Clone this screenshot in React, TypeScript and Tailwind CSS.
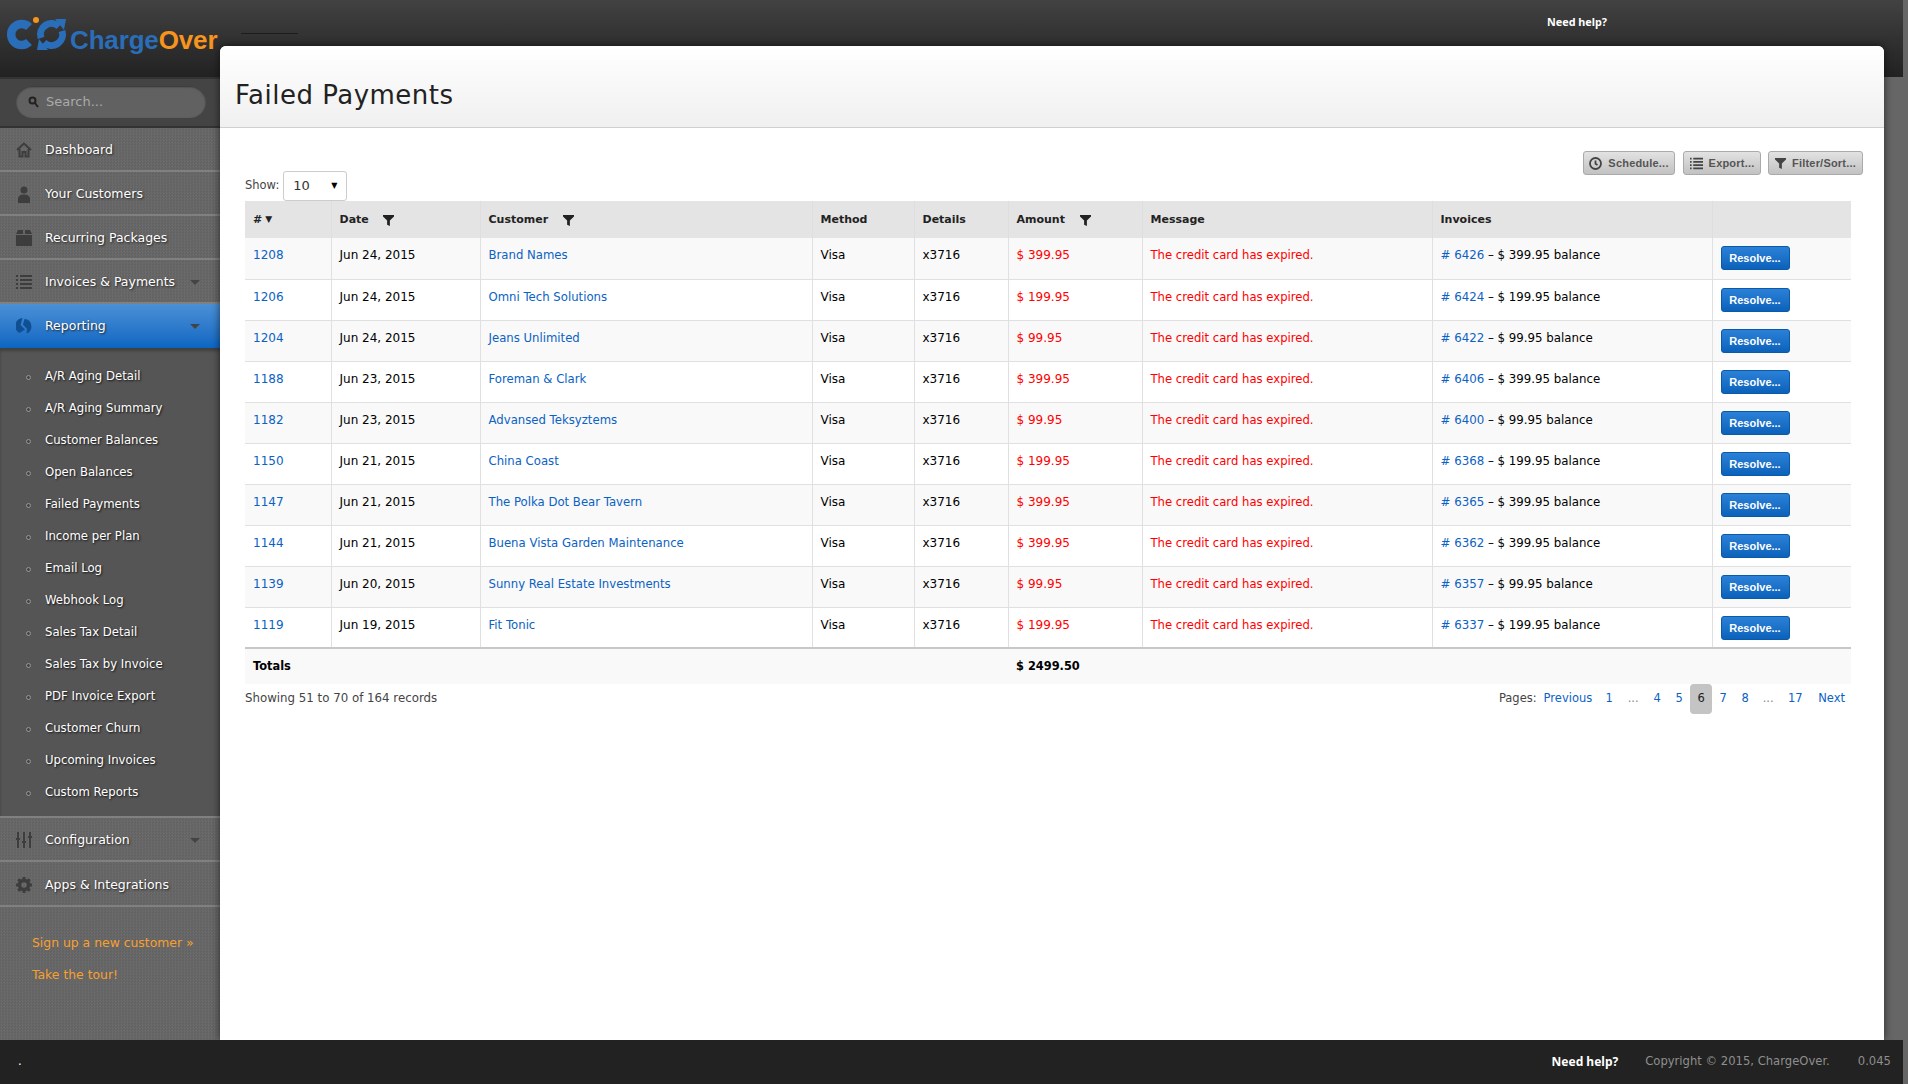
import { ReactNode } from 'react'

type Payment = {
  id: string
  date: string
  customer: string
  amount: string
  invoice: string
}

const payments: Payment[] = [
  { id: '1208', date: 'Jun 24, 2015', customer: 'Brand Names', amount: '399.95', invoice: '6426' },
  { id: '1206', date: 'Jun 24, 2015', customer: 'Omni Tech Solutions', amount: '199.95', invoice: '6424' },
  { id: '1204', date: 'Jun 24, 2015', customer: 'Jeans Unlimited', amount: '99.95', invoice: '6422' },
  { id: '1188', date: 'Jun 23, 2015', customer: 'Foreman & Clark', amount: '399.95', invoice: '6406' },
  { id: '1182', date: 'Jun 23, 2015', customer: 'Advansed Teksyztems', amount: '99.95', invoice: '6400' },
  { id: '1150', date: 'Jun 21, 2015', customer: 'China Coast', amount: '199.95', invoice: '6368' },
  { id: '1147', date: 'Jun 21, 2015', customer: 'The Polka Dot Bear Tavern', amount: '399.95', invoice: '6365' },
  { id: '1144', date: 'Jun 21, 2015', customer: 'Buena Vista Garden Maintenance', amount: '399.95', invoice: '6362' },
  { id: '1139', date: 'Jun 20, 2015', customer: 'Sunny Real Estate Investments', amount: '99.95', invoice: '6357' },
  { id: '1119', date: 'Jun 19, 2015', customer: 'Fit Tonic', amount: '199.95', invoice: '6337' },
]

const reports = [
  'A/R Aging Detail',
  'A/R Aging Summary',
  'Customer Balances',
  'Open Balances',
  'Failed Payments',
  'Income per Plan',
  'Email Log',
  'Webhook Log',
  'Sales Tax Detail',
  'Sales Tax by Invoice',
  'PDF Invoice Export',
  'Customer Churn',
  'Upcoming Invoices',
  'Custom Reports',
]

const HomeIcon = () => (
  <svg width="16" height="16" viewBox="0 0 16 16" fill="none" stroke="#3d3d3d" strokeWidth="2">
    <path d="M1 8 8 1.5 15 8M3.5 7v7.5h3V10h3v4.5h3V7" />
  </svg>
)

const UserIcon = () => (
  <svg width="16" height="17" viewBox="0 0 16 17" fill="#3d3d3d">
    <circle cx="8" cy="4" r="3.5" />
    <path d="M2 17v-4c0-3 2-4.5 6-4.5s6 1.500 6 4.500v4z" />
  </svg>
)

const BoxIcon = () => (
  <svg width="16" height="16" viewBox="0 0 16 16" fill="#3d3d3d">
    <path d="M2 0h5v4H0zM9 0h5l2 4H9zM0 5h16v11H0z" />
  </svg>
)

const ListIcon = ({ color = '#3d3d3d', size = 16 }: { color?: string; size?: number }) => (
  <svg width={size} height={size} viewBox="0 0 16 16" fill={color}>
    <path d="M0 1h2v2H0zM4 1h12v2H4zM0 5h2v2H0zM4 5h12v2H4zM0 9h2v2H0zM4 9h12v2H4zM0 13h2v2H0zM4 13h12v2H4z" />
  </svg>
)

const PieIcon = () => (
  <svg width="16" height="16" viewBox="0 0 16 16" fill="#0f4f92">
    <path d="M6.500 0 4.500 7 9 11.500 3.500 15A8 8 0 0 1 6.500 0z" />
    <path d="M8.500 1A7.500 7.500 0 0 1 10.500 15.500L11 11 7 6.500z" />
  </svg>
)

const SlidersIcon = () => (
  <svg width="16" height="16" viewBox="0 0 16 16" fill="#3d3d3d">
    <path d="M1 0h2v16H1zM7 0h2v16H7zM13 0h2v16h-2zM0 6h4v2H0zM6 9h4v2H6zM12 4h4v2h-4z" />
  </svg>
)

const GearIcon = () => (
  <svg width="16" height="16" viewBox="0 0 16 16">
    <circle cx="8" cy="8" r="4.500" fill="none" stroke="#3d3d3d" strokeWidth="3.500" />
    <path
      d="M8 0v16M0 8h16M2.300 2.300l11.400 11.400M13.700 2.300 2.300 13.700"
      stroke="#3d3d3d"
      strokeWidth="3"
      strokeDasharray="3 10 3 0"
    />
  </svg>
)

const Caret = () => (
  <span className="ml-auto mr-[20px] h-0 w-0 border-x-[5px] border-t-[5px] border-x-transparent border-t-[#444]" />
)

const Funnel = ({ color = '#222', size = 11 }: { color?: string; size?: number }) => (
  <svg width={size} height={size} viewBox="0 0 12 12" fill={color}>
    <path d="M0 0h12v1.500L7.500 6v6l-3-1.500V6L0 1.500z" />
  </svg>
)

const ClockIcon = () => (
  <svg width="13" height="13" viewBox="0 0 13 13" fill="none" stroke="#444" strokeWidth="1.800">
    <circle cx="6.500" cy="6.500" r="5.500" />
    <path d="M6.500 3.500v3.200l2 1.300" />
  </svg>
)

const Logo = () => (
  <div className="flex items-start pl-[5px] pt-[17px]">
    <svg width="62" height="34" viewBox="0 0 62 34" fill="none" className="shrink-0">
      <path d="M24 10A10.500 10.500 0 1 0 24 25" stroke="#2a6db8" strokeWidth="8.500" />
      <circle cx="31" cy="3" r="3" fill="#f7941e" />
      <path d="M36 21A11 11 0 0 1 54 9.500" stroke="#2a6db8" strokeWidth="7" />
      <path d="M57 14A11 11 0 0 1 39 25.500" stroke="#2a6db8" strokeWidth="7" />
      <path d="M50 2h11l-2 11zM43 33H32l2-11z" fill="#2a6db8" />
    </svg>
    <span className="ml-[3px] mt-[8px] font-['Liberation_Sans'] text-[26px] leading-[30px] font-bold tracking-[-0.15px] text-[#2a6db8]">
      Charge<span className="text-[#f7941e]">Over</span>
    </span>
  </div>
)

const NavItem = ({
  icon,
  label,
  caret,
  active,
}: {
  icon: ReactNode
  label: string
  caret?: boolean
  active?: boolean
}) => (
  <div
    className={
      active
        ? 'flex h-[44px] items-center bg-gradient-to-b from-[#4a90d6] to-[#0a66c2] pl-[16px] text-[12.5px] text-white [text-shadow:1px_1px_2px_#222]'
        : 'flex h-[44px] items-center border-b-2 border-b-[#808080] bg-[repeating-conic-gradient(#6a6a6a_0_25%,#626262_0_50%)] bg-[length:3px_3px] pl-[16px] pt-[2px] text-[12.5px] text-white [text-shadow:1px_1px_2px_#222]'
    }
  >
    <span className="flex w-[29px] shrink-0 items-center">{icon}</span>
    <span>{label}</span>
    {caret && <Caret />}
  </div>
)

const ToolButton = ({ icon, label, width }: { icon: ReactNode; label: string; width: string }) => (
  <button
    className={`flex h-[24px] ${width} items-center justify-center gap-[6px] rounded-[3px] border border-[#aaa] bg-gradient-to-b from-[#e2e2e2] to-[#c2c2c2] font-['Liberation_Sans'] text-[11px] font-bold tracking-[0.2px] text-[#555]`}
  >
    {icon}
    {label}
  </button>
)

const Th = ({ children, filter, gap }: { children?: ReactNode; filter?: boolean; gap?: string }) => (
  <th className="border-r border-r-[#dedede] px-[8px] pt-[1px] text-left align-middle text-[11px] font-bold text-[#222] last:border-r-0">
    <span className="flex items-center">
      {children}
      {filter && (
        <span className={gap}>
          <Funnel />
        </span>
      )}
    </span>
  </th>
)

const Td = ({ children, className = '' }: { children?: ReactNode; className?: string }) => (
  <td className={`border-r border-b border-[#e0e0e0] px-[8px] pt-[8px] align-top leading-[18px] last:border-r-0 ${className}`}>
    {children}
  </td>
)

export default function App() {
  return (
    <div className="flex h-screen w-full flex-col overflow-hidden bg-[#666] font-['DejaVu_Sans',sans-serif] text-[12px] text-black">
      <header className="mr-[5px] flex h-[77px] shrink-0 bg-gradient-to-b from-[#424242] to-[#222]">
        <div className="w-[241px] shrink-0">
          <Logo />
        </div>
        <div className="mt-[33px] h-px w-[57px] bg-[#1c1c1c]" />
        <span className="ml-[1249px] mt-[14px] font-['Noto_Sans'] text-[10.8px] font-bold text-white">Need help?</span>
      </header>

      <div className="flex min-h-0 flex-1">
        <aside className="flex w-[220px] shrink-0 flex-col bg-[repeating-conic-gradient(#6a6a6a_0_25%,#626262_0_50%)] bg-[length:3px_3px]">
          <div className="h-[51px] border-y-2 border-[#333] bg-[#444] pl-[16px] pr-[14px] pt-[7px]">
            <div className="flex h-[32px] items-center rounded-full bg-[#616161] pl-[12px] shadow-[inset_0_1px_2px_#333]">
              <svg width="11" height="12" viewBox="0 0 11 12" fill="none" stroke="#222" strokeWidth="2">
                <circle cx="4.500" cy="4.500" r="3" />
                <path d="M7 7l3 4" />
              </svg>
              <input
                placeholder="Search..."
                className="ml-[7px] w-[140px] bg-transparent text-[13px] outline-none placeholder:text-[#aaa]"
              />
            </div>
          </div>

          <NavItem icon={<HomeIcon />} label="Dashboard" />
          <NavItem icon={<UserIcon />} label="Your Customers" />
          <NavItem icon={<BoxIcon />} label="Recurring Packages" />
          <NavItem icon={<ListIcon />} label="Invoices & Payments" caret />
          <NavItem icon={<PieIcon />} label="Reporting" caret active />

          <ul className="flex h-[468px] flex-col bg-[#555] pt-[13px] shadow-[inset_0_3px_3px_rgba(0,0,0,0.25)]">
            {reports.map((name) => (
              <li
                key={name}
                className="flex h-[32px] shrink-0 items-center pl-[26px] text-[11.7px] text-white [text-shadow:1px_1px_2px_#111]"
              >
                <span className="mr-[14px] h-[5px] w-[5px] rounded-full border border-[#999] bg-[#444]" />
                {name}
              </li>
            ))}
          </ul>

          <div className="border-t-2 border-t-[#808080]" />
          <NavItem icon={<SlidersIcon />} label="Configuration" caret />
          <div className="h-px" />
          <NavItem icon={<GearIcon />} label="Apps & Integrations" />

          <div className="flex flex-col gap-[13px] pl-[32px] pt-[26px] text-[12.4px] leading-[19px] text-[#f7a030]">
            <span>Sign up a new customer »</span>
            <span>Take the tour!</span>
          </div>
        </aside>

        <main className="z-10 -mt-[31px] w-[1664px] shrink-0 rounded-t-[6px] bg-white shadow-[0_0_8px_rgba(0,0,0,0.6)]">
          <div className="flex h-[82px] items-center rounded-t-[6px] border-b border-b-[#d0d0d0] bg-gradient-to-b from-white to-[#f0f0f0] pl-[15px] pt-[17px]">
            <h1 className="text-[26px] font-normal tracking-[0.5px] text-[#222]">Failed Payments</h1>
          </div>

          <div className="pl-[25px]">
            <div className="mt-[23px] flex h-[24px] justify-end gap-[7px] pr-[21px]">
              <ToolButton icon={<ClockIcon />} label="Schedule..." width="w-[92px]" />
              <ToolButton icon={<ListIcon color="#444" size={13} />} label="Export..." width="ml-[1px] w-[78px]" />
              <ToolButton icon={<Funnel color="#444" />} label="Filter/Sort..." width="w-[95px]" />
            </div>

            <div className="-mt-[4px] flex h-[30px] items-center text-[#444]">
              <span className="mr-[4px] text-[11.5px]">Show:</span>
              <div className="flex h-[30px] w-[64px] items-center justify-between rounded-[3px] border border-[#ccc] bg-white pl-[9px] pr-[9px] text-[13px] text-[#333]">
                10
                <span className="text-[8px] text-black">▼</span>
              </div>
            </div>

            <table className="w-[1606px] table-fixed border-collapse">
              <colgroup>
                <col className="w-[86px]" />
                <col className="w-[149px]" />
                <col className="w-[332px]" />
                <col className="w-[102px]" />
                <col className="w-[94px]" />
                <col className="w-[134px]" />
                <col className="w-[290px]" />
                <col className="w-[280px]" />
                <col className="w-[139px]" />
              </colgroup>
              <thead>
                <tr className="h-[37px] bg-[#e4e4e4]">
                  <Th>
                    # <span className="ml-[3px] text-[9px]">▼</span>
                  </Th>
                  <Th filter gap="ml-[14px]">
                    Date
                  </Th>
                  <Th filter gap="ml-[15px]">
                    Customer
                  </Th>
                  <Th>Method</Th>
                  <Th>Details</Th>
                  <Th filter gap="ml-[15px]">
                    Amount
                  </Th>
                  <Th>Message</Th>
                  <Th>Invoices</Th>
                  <Th />
                </tr>
              </thead>
              <tbody>
                {payments.map((p, i) => (
                  <tr key={p.id} className={i % 2 === 0 ? 'h-[41px] bg-[#f9f9f9]' : 'h-[41px] bg-white'}>
                    <Td className="text-[#0b62c4]">{p.id}</Td>
                    <Td>{p.date}</Td>
                    <Td className="text-[11.7px] text-[#0b62c4]">{p.customer}</Td>
                    <Td>Visa</Td>
                    <Td>x3716</Td>
                    <Td className="text-[#f00]">$ {p.amount}</Td>
                    <Td className="text-[11.65px] text-[#f00]">The credit card has expired.</Td>
                    <Td className="text-[11.8px]">
                      <span className="text-[#0b62c4]"># {p.invoice}</span> – $ {p.amount} balance
                    </Td>
                    <Td>
                      <button className="block h-[24px] w-[69px] rounded-[3px] border border-[#0b5aa8] bg-gradient-to-b from-[#2b80d8] to-[#0a62ba] font-['Liberation_Sans'] text-[11px] font-bold text-white">
                        Resolve...
                      </button>
                    </Td>
                  </tr>
                ))}
                <tr className="h-[36px] border-t-2 border-t-[#c8c8c8] bg-[#f9f9f9] text-[11.4px]">
                  <td colSpan={5} className="px-[8px] font-bold">
                    Totals
                  </td>
                  <td colSpan={4} className="px-[8px] font-bold">
                    $ 2499.50
                  </td>
                </tr>
              </tbody>
            </table>

            <div className="flex h-[30px] w-[1606px] items-center justify-between text-[11.8px] text-[#444]">
              <span>Showing 51 to 70 of 164 records</span>
              <div className="flex h-full items-center pr-[6px] text-[11.5px] text-[#0b62c4]">
                <span className="mr-[7px] text-[#444]">Pages:</span>
                <span className="mr-[6px]">Previous</span>
                <span className="flex w-[22px] justify-center">1</span>
                <span className="flex w-[26px] justify-center text-[#888]">...</span>
                <span className="flex w-[22px] justify-center">4</span>
                <span className="flex w-[22px] justify-center">5</span>
                <span className="flex h-full w-[22px] items-center justify-center rounded-[4px] bg-[#c4c4c4] text-[#222]">
                  6
                </span>
                <span className="flex w-[22px] justify-center">7</span>
                <span className="flex w-[22px] justify-center">8</span>
                <span className="flex w-[24px] justify-center text-[#888]">...</span>
                <span className="flex w-[30px] justify-center">17</span>
                <span className="ml-[8px]">Next</span>
              </div>
            </div>
          </div>
        </main>
      </div>

      <footer className="z-20 mr-[5px] flex h-[44px] shrink-0 items-center bg-[#222] pr-[12px] text-[11.6px] text-[#8f8f8f]">
        <span className="ml-[18px] text-white">.</span>
        <span className="ml-auto font-['Noto_Sans'] text-[12px] font-bold text-white">Need help?</span>
        <span className="ml-[27px]">Copyright © 2015, ChargeOver.</span>
        <span className="ml-[28px]">0.045</span>
      </footer>
    </div>
  )
}
